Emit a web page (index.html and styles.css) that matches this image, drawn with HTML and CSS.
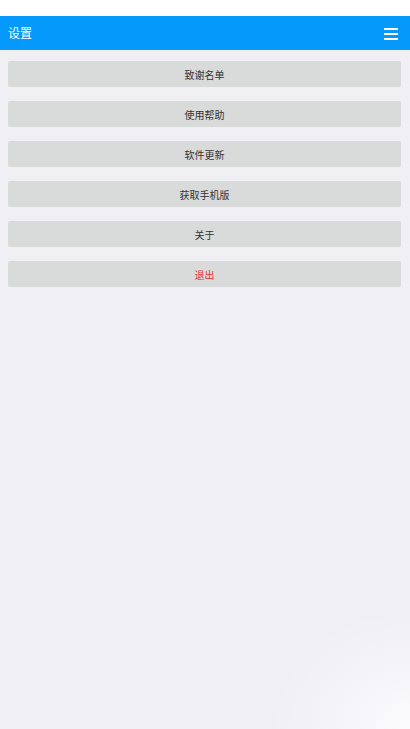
FILE: index.html
```html
<!DOCTYPE html>
<html lang="zh">
<head>
<meta charset="utf-8">
<title>设置</title>
<link rel="stylesheet" href="styles.css">
</head>
<body>
<div class="statusbar"></div>
<header class="topbar">
  <span class="title">设置</span>
  <svg class="menu" width="14" height="12" viewBox="0 0 14 12" aria-hidden="true">
    <rect x="0" y="0" width="14" height="2" fill="#fff"/>
    <rect x="0" y="5" width="14" height="2" fill="#fff"/>
    <rect x="0" y="10" width="14" height="2" fill="#fff"/>
  </svg>
</header>
<main class="list">
  <div class="item">致谢名单</div>
  <div class="item">使用帮助</div>
  <div class="item">软件更新</div>
  <div class="item">获取手机版</div>
  <div class="item">关于</div>
  <div class="item danger">退出</div>
</main>
</body>
</html>
```
FILE: styles.css
```css
html, body {
  margin: 0;
  padding: 0;
  height: 100%;
}
body {
  font-family: "Noto Sans CJK SC", "Noto Sans", sans-serif;
  background-color: #efeff4;
  background-image: radial-gradient(ellipse 140px 120px at 100% 100%, #fbfbfe 0%, rgba(251,251,254,0) 100%);
  background-repeat: no-repeat;
  display: flex;
  flex-direction: column;
}
.statusbar {
  height: 16px;
  background: #ffffff;
}
.topbar {
  height: 34px;
  background: #0499fb;
  display: flex;
  align-items: center;
  justify-content: space-between;
  padding: 0 12px 0 8px;
}
.title {
  color: #ffffff;
  font-size: 12px;
  line-height: 1;
}
.menu {
  display: block;
  margin-top: 1px;
}
.list {
  display: flex;
  flex-direction: column;
  gap: 14px;
  padding: 11px 9px 0 8px;
}
.item {
  height: 26px;
  background: #d9dada;
  border-radius: 2px;
  display: flex;
  align-items: center;
  justify-content: center;
  font-size: 10px;
  color: #333333;
}
.item.danger {
  color: #e8303a;
}
```
